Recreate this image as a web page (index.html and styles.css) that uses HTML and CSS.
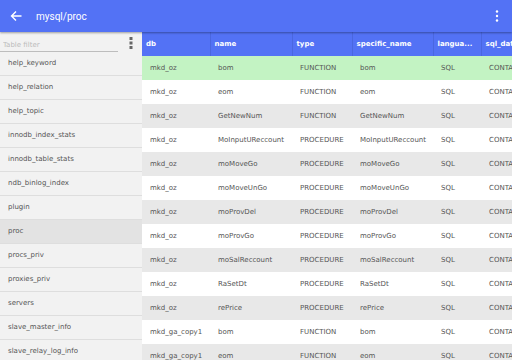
FILE: index.html
```html
<!DOCTYPE html>
<html lang="en">

<head>
    <meta charset="UTF-8">
    <meta name="viewport" content="width=device-width, initial-scale=1.0">
    <title>mysql/proc</title>
    <link rel="stylesheet" href="styles.css">
</head>

<body>
    <header class="appbar">
        <svg class="back" width="12" height="12" viewBox="0 0 12 12">
            <path d="M11.5 6H1.5M6 1.5L1.5 6L6 10.5" fill="none" stroke="#fff" stroke-width="1.4"/>
        </svg>
        <span class="title">mysql/proc</span>
        <svg class="menu" width="4" height="12" viewBox="0 0 4 12">
            <circle cx="2" cy="1.5" r="1.2" fill="#fff"/>
            <circle cx="2" cy="6" r="1.2" fill="#fff"/>
            <circle cx="2" cy="10.5" r="1.2" fill="#fff"/>
        </svg>
    </header>

    <div class="main">
        <aside class="sidebar">
            <div class="filter">
                <input type="text" placeholder="Table filter">
                <svg class="filter-menu" width="4" height="12" viewBox="0 0 4 12">
                    <rect x="0.5" y="0" width="3" height="3" fill="#666"/>
                    <rect x="0.5" y="4.5" width="3" height="3" fill="#666"/>
                    <rect x="0.5" y="9" width="3" height="3" fill="#666"/>
                </svg>
            </div>
            <ul class="tables">
                <li>help_keyword</li>
                <li>help_relation</li>
                <li>help_topic</li>
                <li>innodb_index_stats</li>
                <li>innodb_table_stats</li>
                <li>ndb_binlog_index</li>
                <li>plugin</li>
                <li class="active">proc</li>
                <li>procs_priv</li>
                <li>proxies_priv</li>
                <li>servers</li>
                <li>slave_master_info</li>
                <li>slave_relay_log_info</li>
            </ul>
        </aside>

        <div class="grid">
            <table>
                <colgroup>
                    <col class="c-db">
                    <col class="c-name">
                    <col class="c-type">
                    <col class="c-spec">
                    <col class="c-lang">
                    <col class="c-data">
                </colgroup>
                <thead>
                    <tr>
                        <th>db</th>
                        <th>name</th>
                        <th>type</th>
                        <th>specific_name</th>
                        <th>langua...</th>
                        <th>sql_data_access</th>
                    </tr>
                </thead>
                <tbody>
                    <tr class="picked"><td>mkd_oz</td><td>bom</td><td>FUNCTION</td><td>bom</td><td>SQL</td><td>CONTAINS SQL</td></tr>
                    <tr><td>mkd_oz</td><td>eom</td><td>FUNCTION</td><td>eom</td><td>SQL</td><td>CONTAINS SQL</td></tr>
                    <tr><td>mkd_oz</td><td>GetNewNum</td><td>FUNCTION</td><td>GetNewNum</td><td>SQL</td><td>CONTAINS SQL</td></tr>
                    <tr><td>mkd_oz</td><td>MoInputUReccount</td><td>PROCEDURE</td><td>MoInputUReccount</td><td>SQL</td><td>CONTAINS SQL</td></tr>
                    <tr><td>mkd_oz</td><td>moMoveGo</td><td>PROCEDURE</td><td>moMoveGo</td><td>SQL</td><td>CONTAINS SQL</td></tr>
                    <tr><td>mkd_oz</td><td>moMoveUnGo</td><td>PROCEDURE</td><td>moMoveUnGo</td><td>SQL</td><td>CONTAINS SQL</td></tr>
                    <tr><td>mkd_oz</td><td>moProvDel</td><td>PROCEDURE</td><td>moProvDel</td><td>SQL</td><td>CONTAINS SQL</td></tr>
                    <tr><td>mkd_oz</td><td>moProvGo</td><td>PROCEDURE</td><td>moProvGo</td><td>SQL</td><td>CONTAINS SQL</td></tr>
                    <tr><td>mkd_oz</td><td>moSalReccount</td><td>PROCEDURE</td><td>moSalReccount</td><td>SQL</td><td>CONTAINS SQL</td></tr>
                    <tr><td>mkd_oz</td><td>RaSetDt</td><td>PROCEDURE</td><td>RaSetDt</td><td>SQL</td><td>CONTAINS SQL</td></tr>
                    <tr><td>mkd_oz</td><td>rePrice</td><td>PROCEDURE</td><td>rePrice</td><td>SQL</td><td>CONTAINS SQL</td></tr>
                    <tr><td>mkd_ga_copy1</td><td>bom</td><td>FUNCTION</td><td>bom</td><td>SQL</td><td>CONTAINS SQL</td></tr>
                    <tr><td>mkd_ga_copy1</td><td>eom</td><td>FUNCTION</td><td>eom</td><td>SQL</td><td>CONTAINS SQL</td></tr>
                </tbody>
            </table>
        </div>
    </div>
</body>

</html>
```

FILE: styles.css
```css
* {
    box-sizing: border-box;
}

html,
body {
    margin: 0;
    height: 100%;
    overflow: hidden;
}

body {
    background-color: #fff;
    font-family: 'DejaVu Sans', sans-serif;
    font-size: 7px;
    color: #555;
}

.appbar {
    position: relative;
    z-index: 2;
    display: flex;
    align-items: center;
    height: 32px;
    padding: 0 13px 0 10px;
    background-color: #5372f5;
    box-shadow: 0 1px 2px rgba(0, 0, 0, 0.35);
}

.back {
    flex: none;
}

.title {
    flex: 1;
    margin-left: 14px;
    font-family: 'Roboto', sans-serif;
    font-size: 10px;
    color: #fff;
}

.main {
    display: flex;
    height: 328px;
}

.sidebar {
    flex: none;
    width: 142px;
    background-color: #f2f2f2;
    overflow: hidden;
}

.filter {
    display: flex;
    align-items: center;
    height: 20px;
    padding: 2px 9px 0 0;
}

.filter input {
    flex: none;
    width: 118px;
    height: 14px;
    margin-top: 4px;
    padding: 0 0 0 3px;
    border: none;
    border-bottom: 1px solid #bdbdbd;
    background: transparent;
    font-family: 'DejaVu Sans', sans-serif;
    font-size: 7px;
    outline: none;
}

.filter input::placeholder {
    color: #bbb;
}

.filter-menu {
    margin-left: auto;
}

.tables {
    list-style: none;
    margin: 0;
    padding: 0;
}

.tables li {
    height: 24px;
    line-height: 23px;
    padding-left: 8px;
    border-bottom: 1px solid #dedede;
    white-space: nowrap;
}

.tables li.active {
    background-color: #e3e3e3;
}

.grid {
    flex: 1;
    overflow: hidden;
}

table {
    table-layout: fixed;
    border-collapse: collapse;
    width: 470px;
}

.c-db { width: 68px; }
.c-name { width: 82px; }
.c-type { width: 60px; }
.c-spec { width: 81px; }
.c-lang { width: 48px; }
.c-data { width: 131px; }

th {
    height: 24px;
    padding: 0 4px;
    background-color: #5372f5;
    border-right: 1px solid #4a67e0;
    color: #fff;
    font-weight: bold;
    text-align: left;
    white-space: nowrap;
    overflow: hidden;
}

td {
    height: 24px;
    padding: 0 8px;
    white-space: nowrap;
    overflow: hidden;
}

tbody tr:nth-child(even) {
    background-color: #fff;
}

tbody tr:nth-child(odd) {
    background-color: #e8e8e8;
}

tbody tr.picked {
    background-color: #c3f3c3;
}
```
